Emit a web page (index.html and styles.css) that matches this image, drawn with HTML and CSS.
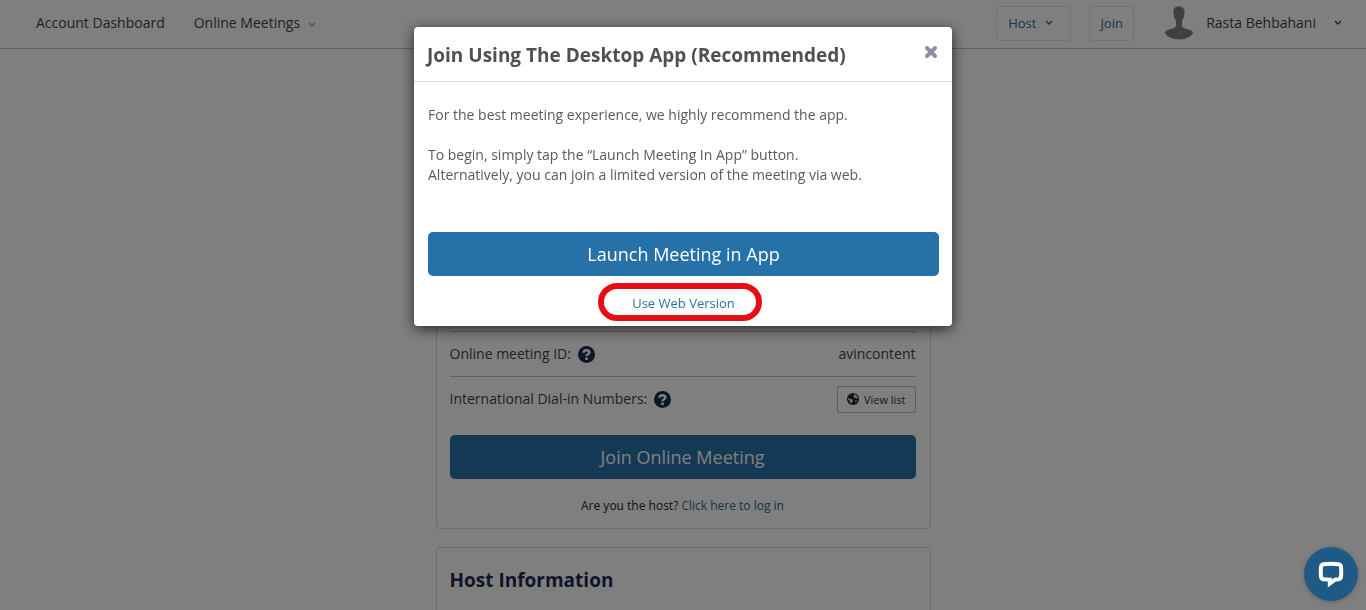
FILE: index.html
```html
<!DOCTYPE html>
<html lang="en">
<head>
  <meta charset="UTF-8">
  <title>Online Meeting</title>
  <link rel="stylesheet" href="styles.css">
</head>
<body>
  <header class="topbar">
    <nav class="nav">
      <a href="#">Account Dashboard</a>
      <a href="#">Online Meetings
        <svg class="caret light" viewBox="0 0 8 6"><path d="M1 1l3 3 3-3"/></svg>
      </a>
    </nav>
    <div class="account">
      <button class="btn-outline host" type="button">Host
        <svg class="caret" viewBox="0 0 8 6"><path d="M1 1l3 3 3-3"/></svg>
      </button>
      <button class="btn-outline join" type="button">Join</button>
      <a class="user" href="#">
        <svg class="avatar" viewBox="0 0 28 34">
          <path d="M8.500 6C8 2.500 10.500.5 13 .5c3.500-.5 6.500 1.500 6.500 5.500 0 4-.8 6.500-2.500 9v4.500c0 2 2 3 5 3.500 3.500.7 6 2 6 3.800-1.500 4-8 6.700-14 6.700S1.500 30.800 0 26.800c0-1.800 2.500-3.100 6-3.800 3-.5 5-1.500 5-3.500V15C9 12.500 8.500 9 8.500 6z"/>
        </svg>
        Rasta Behbahani
        <svg class="caret" viewBox="0 0 8 6"><path d="M1 1l3 3 3-3"/></svg>
      </a>
    </div>
  </header>

  <main class="content">
    <section class="card meeting">
      <div class="row">
        <span class="label">Online meeting ID:
          <svg class="help" viewBox="0 0 16 16"><circle cx="8" cy="8" r="8"/><path d="M5.200 6.400C5.200 4.700 6.300 4 8 4s2.700.9 2.700 2.200C10.700 7.800 8 7.700 8 9.600"/><rect x="6.800" y="10.800" width="2.400" height="2.400"/></svg>
        </span>
        <span>avincontent</span>
      </div>
      <div class="row">
        <span class="label">International Dial-in Numbers:
          <svg class="help" viewBox="0 0 16 16"><circle cx="8" cy="8" r="8"/><path d="M5.200 6.400C5.200 4.700 6.300 4 8 4s2.700.9 2.700 2.200C10.700 7.800 8 7.700 8 9.600"/><rect x="6.800" y="10.800" width="2.400" height="2.400"/></svg>
        </span>
        <button class="btn-list" type="button">
          <svg class="globe" viewBox="0 0 12 12"><circle cx="6" cy="6" r="6"/><path d="M6.500 1l2.200.8 1.800 2 .4 1.600-1.200.2-1-1-1.400.6-1-1.200.8-1.200z"/><path d="M1.200 5l2.400 1 2 .6.6 1.200-1.200 1.400-.4 1.400-1.400-.8-.4-1.800-1.600-1.600z"/><path d="M8.400 7.200l1.600.2-.8 1.800-1 .4z"/></svg>
          View list
        </button>
      </div>
      <button class="btn-primary" type="button">Join Online Meeting</button>
      <p class="login">Are you the host? <a href="#">Click here to log in</a></p>
    </section>

    <section class="card info">
      <h2>Host Information</h2>
    </section>
  </main>

  <div class="overlay">
    <div class="modal" role="dialog" aria-modal="true" aria-labelledby="modal-title">
      <div class="modal-header">
        <h1 id="modal-title">Join Using The Desktop App (Recommended)</h1>
        <button class="close" type="button" aria-label="Close">
          <svg viewBox="0 0 14 14"><path d="M3 3l8 8M11 3l-8 8"/></svg>
        </button>
      </div>
      <div class="modal-body">
        <p>For the best meeting experience, we highly recommend the app.</p>
        <p>To begin, simply tap the “Launch Meeting In App” button.<br>Alternatively, you can join a limited version of the meeting via web.</p>
        <button class="btn-primary" type="button">Launch Meeting in App</button>
        <div class="web">
          <a href="#">Use Web Version</a>
          <span class="ring"></span>
        </div>
      </div>
    </div>
  </div>

  <button class="chat" type="button" aria-label="Chat">
    <svg viewBox="0 0 26 26"><path d="M5.500 3.200Q13 2.400 20.500 3.200Q22.800 3.500 23 6Q23.500 11 23 15.500Q22.800 17.800 20.500 18.200L17 18.600L11.800 22.500V18.600L5.500 18.200Q3.200 17.800 3 15.500Q2.500 11 3 6Q3.200 3.500 5.500 3.200z"/></svg>
  </button>
</body>
</html>
```
FILE: styles.css
```css
* {
  box-sizing: border-box;
}
body {
  margin: 0;
  height: 100vh;
  overflow: hidden;
  background-color: #fff;
  color: #5a5a5a;
  font-family: "Open Sans", sans-serif;
  font-size: 14px;
  line-height: 20px;
}
h1, h2, p {
  margin: 0;
}
a {
  color: #2672a8;
  text-decoration: none;
}
button {
  font-family: inherit;
  cursor: pointer;
}
.topbar {
  display: flex;
  justify-content: space-between;
  align-items: center;
  height: 49px;
  padding: 0 24px 2px 36px;
  border-bottom: 1px solid #bbb;
}
.nav, .account, .user {
  display: flex;
  align-items: center;
}
.nav {
  gap: 29px;
}
.nav a, .user {
  color: #444;
}
.caret {
  width: 8px;
  height: 6px;
  margin-left: 4px;
  fill: none;
  stroke: currentColor;
  stroke-width: 1.4;
}
.caret.light {
  stroke: #999;
}
.btn-outline {
  display: flex;
  align-items: center;
  height: 35px;
  padding: 0 11px;
  border: 1px solid #e4e4e4;
  border-radius: 4px;
  background: none;
  color: #2a6a90;
  font-size: 13px;
}
.host {
  width: 75px;
}
.host .caret {
  margin-left: 9px;
}
.join {
  width: 45px;
  padding: 0;
  justify-content: center;
  margin-left: 18px;
}
.avatar {
  width: 28px;
  height: 34px;
  margin-right: 13px;
  fill: #808080;
}
.user {
  margin-left: 31px;
}
.user .caret {
  margin-left: 18px;
}
.content {
  width: 495px;
  max-width: 100%;
  margin: 20px auto 0;
}
.card {
  border: 1px solid #d9d9d9;
  border-radius: 4px;
  padding: 0 14px;
  margin-bottom: 18px;
}
.meeting {
  padding: 261px 14px 12px 13px;
}
.row {
  display: flex;
  justify-content: space-between;
  align-items: center;
  height: 45px;
  border-top: 1px solid #c4c4c4;
  color: #444;
}
.label {
  display: flex;
  align-items: center;
  gap: 7px;
}
.help {
  width: 17px;
  height: 17px;
  fill: #1c2b50;
}
.help path {
  fill: none;
  stroke: #fff;
  stroke-width: 2.4;
}
.help rect {
  fill: #fff;
}
.btn-list {
  display: flex;
  align-items: center;
  gap: 5px;
  height: 27px;
  padding: 0 9px;
  border: 1px solid #bbb;
  border-radius: 2px;
  background: none;
  color: #333;
  font-size: 11px;
}
.globe {
  width: 12px;
  height: 12px;
  fill: #222;
}
.globe path {
  fill: #ddd;
}
.btn-primary {
  display: block;
  width: 100%;
  height: 44px;
  border: 0;
  border-radius: 5px;
  background-color: #2672a8;
  color: #fff;
  font-size: 18px;
}
.meeting .btn-primary {
  margin-top: 14px;
}
.login {
  margin-top: 17px;
  color: #222;
  font-size: 12px;
  text-align: center;
}
.login a {
  color: #2a6a90;
}
.info {
  height: 120px;
  padding: 19px 13px;
}
.info h2 {
  color: #1c2b50;
  font-size: 19px;
  font-weight: 700;
  line-height: 26px;
}
.overlay {
  position: fixed;
  inset: 0;
  padding-top: 27px;
  background-color: rgba(0, 0, 0, .5);
}
.modal {
  width: 538px;
  max-width: 100%;
  margin: 0 auto;
  border-radius: 4px;
  background-color: #fff;
  box-shadow: 0 3px 14px rgba(0, 0, 0, .7);
}
.modal-header {
  display: flex;
  justify-content: space-between;
  align-items: flex-start;
  padding: 15px 14px 13px 13px;
  border-bottom: 1px solid #ddd;
}
.modal-header h1 {
  color: #505050;
  font-size: 19px;
  font-weight: 700;
  line-height: 26px;
}
.close {
  padding: 0;
  margin-top: 3px;
  border: 0;
  background: none;
}
.close svg {
  display: block;
  width: 14px;
  height: 14px;
  stroke: #8b8fab;
  stroke-width: 4;
  stroke-linecap: round;
}
.modal-body {
  padding: 23px 13px 13px 14px;
}
.modal-body p {
  margin-bottom: 20px;
}
.modal-body .btn-primary {
  margin-top: 47px;
  font-weight: 500;
}
.web {
  position: relative;
  width: fit-content;
  margin: 17px auto 0;
  font-size: 13px;
}
/* highlight around the web version link */
.ring {
  position: absolute;
  inset: -10px -27px -8px -34px;
  border: 6px solid #e80c14;
  border-radius: 19px;
  pointer-events: none;
}
.chat {
  position: fixed;
  right: 8px;
  bottom: 9px;
  width: 54px;
  height: 54px;
  padding: 14px;
  border: 0;
  border-radius: 50%;
  background-color: #1f5a87;
  box-shadow: 0 1px 5px rgba(0, 0, 0, .2);
}
.chat svg {
  display: block;
  fill: none;
  stroke: #fff;
  stroke-width: 4;
}
```
